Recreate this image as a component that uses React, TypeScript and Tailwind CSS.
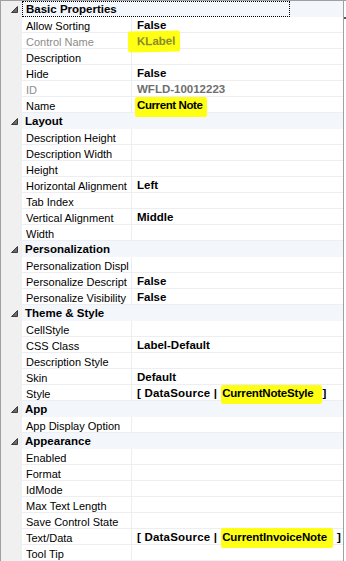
import React from 'react';

type Item = {
  name: string;
  value?: React.ReactNode;
  dim?: boolean;
};

type Group = {
  title: string;
  focused?: boolean;
  items: Item[];
};

const Mark = ({ children, className = '' }: { children: React.ReactNode; className?: string }) => (
  <span className={`relative z-10 inline-block bg-[#ffff14] rounded-[2px] ${className}`}>{children}</span>
);

const groups: Group[] = [
  {
    title: 'Basic Properties',
    focused: true,
    items: [
      { name: 'Allow Sorting', value: 'False' },
      {
        name: 'Control Name',
        dim: true,
        value: (
          <Mark className="-ml-[9px] pl-[9px] pr-[5px] pt-[5px] pb-[4px] -mt-[5px] -mb-[4px] text-[#8a8a2a] rotate-[-1deg]">
            KLabel
          </Mark>
        ),
      },
      { name: 'Description' },
      { name: 'Hide', value: 'False' },
      { name: 'ID', dim: true, value: <span className="text-[#6e6e6e]">WFLD-10012223</span> },
      {
        name: 'Name',
        value: (
          <Mark className="-ml-[2px] pl-[2px] pr-[5px] pt-[3px] pb-[5px] -mt-[3px] -mb-[5px] tracking-[-0.4px]">
            Current Note
          </Mark>
        ),
      },
    ],
  },
  {
    title: 'Layout',
    items: [
      { name: 'Description Height' },
      { name: 'Description Width' },
      { name: 'Height' },
      { name: 'Horizontal Alignment', value: 'Left' },
      { name: 'Tab Index' },
      { name: 'Vertical Alignment', value: 'Middle' },
      { name: 'Width' },
    ],
  },
  {
    title: 'Personalization',
    items: [
      { name: 'Personalization Displ' },
      { name: 'Personalize Descript', value: 'False' },
      { name: 'Personalize Visibility', value: 'False' },
    ],
  },
  {
    title: 'Theme & Style',
    items: [
      { name: 'CellStyle' },
      { name: 'CSS Class', value: 'Label-Default' },
      { name: 'Description Style' },
      { name: 'Skin', value: 'Default' },
      {
        name: 'Style',
        value: (
          <>
            <span className="font-semibold tracking-[0.2px]">[ DataSource |</span>
            <Mark className="ml-[4px] pl-[1px] pr-[8px] pt-[3px] pb-[4px] -mt-[3px] -mb-[4px] tracking-[-0.2px]">
              CurrentNoteStyle
            </Mark>
            <span className="ml-[1px]">]</span>
          </>
        ),
      },
    ],
  },
  {
    title: 'App',
    items: [{ name: 'App Display Option' }],
  },
  {
    title: 'Appearance',
    items: [
      { name: 'Enabled' },
      { name: 'Format' },
      { name: 'IdMode' },
      { name: 'Max Text Length' },
      { name: 'Save Control State' },
      {
        name: 'Text/Data',
        value: (
          <>
            <span className="font-semibold tracking-[0.2px]">[ DataSource |</span>
            <Mark className="ml-[4px] pl-[1px] pr-[6px] pt-[4px] pb-[4px] -mt-[4px] -mb-[4px] tracking-[-0.1px]">
              CurrentInvoiceNote
            </Mark>
            <span className="ml-[4px]">]</span>
          </>
        ),
      },
      { name: 'Tool Tip' },
    ],
  },
];

const Arrow = () => (
  <svg width="7" height="7" viewBox="0 0 7 7" className="block">
    <path d="M6.5 0.5 L6.5 6.5 L0.5 6.5 Z" fill="#6b6b6b" stroke="#3c3c3c" strokeWidth="1" />
  </svg>
);

const HeaderRow = ({ title, focused }: { title: string; focused?: boolean }) => (
  <div className="flex h-4">
    <div className="w-[21px] shrink-0 bg-[#f0f0f0] flex items-center justify-end pr-[4px] pt-[1px]">
      <Arrow />
    </div>
    <div className="flex-1 bg-[#f3f6fb] flex items-center">
      <div
        className={`h-4 flex items-center pl-[3px] pt-[2px] text-[11.5px] font-bold text-black ${
          focused ? 'w-[268px] border border-dotted border-black' : ''
        }`}
      >
        {title}
      </div>
    </div>
  </div>
);

const ItemRow = ({ name, value, dim }: Item) => (
  <div className="flex h-4">
    <div className="w-[21px] shrink-0 bg-[#f0f0f0]" />
    <div className="w-[110px] shrink-0 border-b border-r border-[#eceef2] pl-[4px] pt-[3px] flex items-center overflow-hidden whitespace-nowrap">
      <span className={dim ? 'text-[#8c8c8c]' : 'text-black'}>{name}</span>
    </div>
    <div className="flex-1 border-b border-[#eceef2] pl-[5px] pt-[3px] flex items-center whitespace-nowrap text-[11.5px] font-bold text-black">
      {value}
    </div>
  </div>
);

export default function App() {
  return (
    <div
      className="w-[346px] h-[561px] overflow-hidden bg-white flex text-[11px] leading-none"
      style={{ fontFamily: '"Liberation Sans", Arial, sans-serif' }}
    >
      <div className="w-[344px] shrink-0 border-t border-l border-r border-[#a0a0a0]">
        {groups.map((g) => (
          <React.Fragment key={g.title}>
            <HeaderRow title={g.title} focused={g.focused} />
            {g.items.map((it) => (
              <ItemRow key={it.name} {...it} />
            ))}
          </React.Fragment>
        ))}
      </div>
      <div className="flex-1 relative border-t border-[#a0a0a0]">
        <div className="absolute left-0 top-[16px] w-[2px] h-[2px] bg-[#555]" />
      </div>
    </div>
  );
}
